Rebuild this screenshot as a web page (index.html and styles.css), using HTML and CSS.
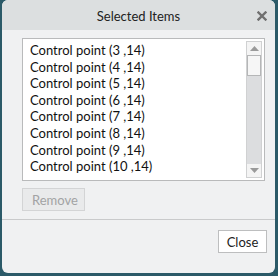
FILE: index.html
```html
<!DOCTYPE html>
<html>
<head>
<meta charset="utf-8">
<link rel="stylesheet" href="styles.css">
</head>
<body>
<div class="dialog">
  <div class="titlebar">
    <span class="title">Selected Items</span>
    <span class="close-x">
      <svg width="10" height="10" viewBox="0 0 10 10"><path d="M1.5 1.5 L8.5 8.5 M8.5 1.5 L1.5 8.5" stroke="#707070" stroke-width="2.4" stroke-linecap="square"/></svg>
    </span>
  </div>
  <div class="body">
    <div class="listbox">
      <ul class="items">
        <li>Control point (3 ,14)</li>
        <li>Control point (4 ,14)</li>
        <li>Control point (5 ,14)</li>
        <li>Control point (6 ,14)</li>
        <li>Control point (7 ,14)</li>
        <li>Control point (8 ,14)</li>
        <li>Control point (9 ,14)</li>
        <li>Control point (10 ,14)</li>
      </ul>
      <div class="scrollbar">
        <div class="arrow up"><svg width="9" height="5" viewBox="0 0 9 5"><path d="M0 5 L4.5 0 L9 5 Z" fill="#9a9a9a"/></svg></div>
        <div class="thumb"></div>
        <div class="track"></div>
        <div class="arrow down"><svg width="9" height="5" viewBox="0 0 9 5"><path d="M0 0 L4.5 5 L9 0 Z" fill="#9a9a9a"/></svg></div>
      </div>
    </div>
    <div class="actions">
      <button class="btn disabled">Remove</button>
    </div>
  </div>
  <div class="footer">
    <button class="btn close">Close</button>
  </div>
</div>
</body>
</html>
```

FILE: styles.css
```css
html, body {
  margin: 0;
  padding: 0;
}
body {
  width: 278px;
  height: 276px;
  background: #2b5a68;
  font-family: "Lato", "Noto Sans", sans-serif;
  overflow: hidden;
}
.dialog {
  margin-left: 2px;
  width: 273px;
  height: 273px;
  background: #f0f1f2;
  border-radius: 6px;
  overflow: hidden;
  display: flex;
  flex-direction: column;
}
.titlebar {
  height: 30px;
  background: #dcdfe0;
  display: flex;
  align-items: center;
  justify-content: center;
  position: relative;
  flex: none;
}
.title {
  font-size: 13px;
  color: #222;
  padding-top: 2px;
}
.close-x {
  position: absolute;
  right: 8px;
  top: 11px;
  width: 10px;
  height: 10px;
  display: flex;
}
.body {
  padding: 8px 10px 0 20px;
  flex: none;
  height: 190px;
  box-sizing: border-box;
  border-bottom: 1px solid #c9cacb;
}
.listbox {
  width: 243px;
  height: 143px;
  box-sizing: border-box;
  border: 1px solid #b9babb;
  background: #fff;
  display: flex;
}
.items {
  list-style: none;
  margin: 0;
  padding: 3px 0 0 7px;
  flex: 1;
  overflow: hidden;
}
.items li {
  font-size: 13px;
  line-height: 16.6px;
  color: #111;
  white-space: nowrap;
}
.scrollbar {
  width: 14px;
  margin: 2px 2px 2px 0;
  display: flex;
  flex-direction: column;
  border: 1px solid #d0d1d2;
  background: #f4f4f4;
}
.arrow {
  height: 13px;
  display: flex;
  align-items: center;
  justify-content: center;
  background: #f4f4f4;
  flex: none;
}
.thumb {
  height: 21px;
  flex: none;
  border: 1px solid #b5b6b7;
  background: #f6f6f6;
  box-sizing: border-box;
}
.track {
  flex: 1;
  background: #dcdddf;
}
.actions {
  margin-top: 7px;
  display: flex;
}
.btn {
  font-family: "Lato", "Noto Sans", sans-serif;
  font-size: 13px;
  height: 23px;
  padding: 0 9px;
  background: #fff;
  border: 1px solid #bdbebf;
  color: #222;
  margin: 0;
  line-height: 20px;
}
.btn.disabled {
  background: #e9eaeb;
  border-color: #d3d4d5;
  color: #a2a3a4;
  width: 63px;
}
.btn.close {
  width: 49px;
  padding: 0;
}
.footer {
  flex: 1;
  display: flex;
  justify-content: flex-end;
  align-items: flex-start;
  padding: 10px 8px 0 0;
}
```
